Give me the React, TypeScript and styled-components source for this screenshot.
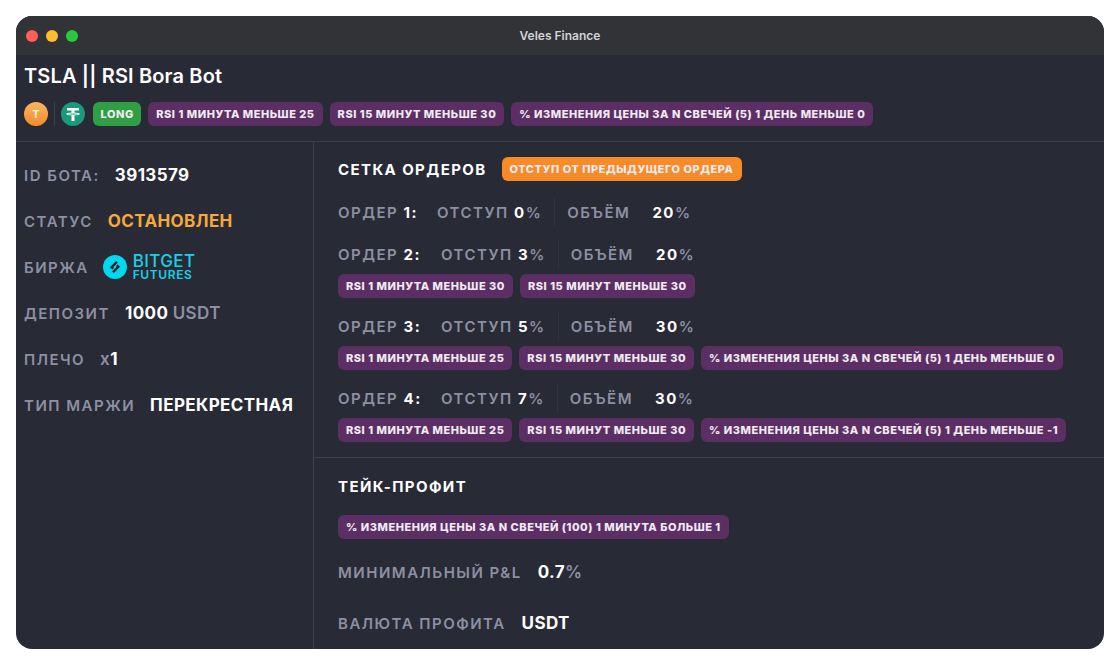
import React from "react";
import styled, { createGlobalStyle } from "styled-components";

const GlobalStyle = createGlobalStyle`
  html, body {
    margin: 0;
    background: #fff;
    font-family: "Inter", "Liberation Sans", sans-serif;
  }
`;

const Page = styled.div`
  padding: 16px;
  width: 1120px;
  height: 665px;
  box-sizing: border-box;
`;

const Window = styled.div`
  width: 1088px;
  height: 633px;
  background: #282a36;
  border-radius: 16px;
  overflow: hidden;
  display: flex;
  flex-direction: column;
`;

const TitleBar = styled.div`
  height: 39px;
  flex: none;
  background: #323336;
  display: flex;
  align-items: center;
  justify-content: center;
  position: relative;
  color: #d2d3d5;
  font-size: 12px;
  font-weight: 600;
`;

const Lights = styled.div`
  position: absolute;
  left: 10px;
  top: 14px;
  display: flex;
  gap: 8px;
`;

const Light = styled.span<{ $color: string }>`
  width: 12px;
  height: 12px;
  border-radius: 50%;
  background: ${(p) => p.$color};
`;

const Header = styled.div`
  flex: none;
  height: 87px;
  padding: 9px 8px 0;
  box-sizing: border-box;
  border-bottom: 1px solid #3b3e4b;
`;

const BotTitle = styled.h1`
  margin: 0 0 14px;
  font-size: 20px;
  line-height: 24px;
  font-weight: 600;
  letter-spacing: 0.15px;
  color: #fff;
`;

const TagRow = styled.div`
  display: flex;
  align-items: center;
  gap: 7px;
`;

const CoinGroup = styled.div`
  display: flex;
  align-items: center;
  gap: 6px;
  margin-right: 1px;
`;

const CoinDivider = styled.span`
  width: 1px;
  height: 24px;
  background: #3b3e4b;
`;

const CoinT = styled.span`
  width: 24px;
  height: 24px;
  border-radius: 50%;
  background: linear-gradient(180deg, #f9b65e, #f58a2c);
  color: #fff0dd;
  font-size: 11px;
  font-weight: 700;
  display: flex;
  align-items: center;
  justify-content: center;
`;

const Tag = styled.span<{ $bg?: string }>`
  height: 24px;
  display: inline-flex;
  align-items: center;
  padding: 0 8px;
  border-radius: 6px;
  background: ${(p) => p.$bg ?? "#5c2f64"};
  color: #f1eaf2;
  font-size: 11px;
  font-weight: 800;
  letter-spacing: 0.53px;
  white-space: nowrap;
`;

const LongTag = styled(Tag)`
  padding: 0 7.5px;
`;

const Main = styled.div`
  flex: 1;
  display: flex;
  min-height: 0;
`;

const Sidebar = styled.div`
  width: 298px;
  flex: none;
  border-right: 1px solid #3b3e4b;
  padding: 10px 8px 0;
  box-sizing: border-box;
  display: flex;
  flex-direction: column;
`;

const InfoRow = styled.div`
  height: 46px;
  display: flex;
  align-items: center;
  gap: 15px;
`;

const Label = styled.span`
  color: #8d90a2;
  font-size: 15px;
  font-weight: 600;
  letter-spacing: 1.5px;
  white-space: nowrap;
`;

const Value = styled.span<{ $color?: string }>`
  color: ${(p) => p.$color ?? "#fff"};
  font-size: 17px;
  font-weight: 700;
  letter-spacing: 0.4px;
  white-space: nowrap;
`;

const Muted = styled.span`
  color: #8d90a2;
  font-weight: 600;
`;

const Exchange = styled.div`
  display: flex;
  align-items: center;
  gap: 6px;
  margin-left: -1px;
  color: #1bd0e6;
`;

const ExchangeText = styled.div`
  display: flex;
  flex-direction: column;
`;

const ExchangeName = styled.span`
  font-size: 17px;
  line-height: 15px;
  font-weight: 500;
  letter-spacing: 0.4px;
`;

const ExchangeSub = styled.span`
  font-size: 12px;
  line-height: 12px;
  font-weight: 600;
  letter-spacing: 0.6px;
`;

const Content = styled.div`
  flex: 1;
  display: flex;
  flex-direction: column;
`;

const Section = styled.div<{ $border?: boolean }>`
  padding: ${(p) => (p.$border ? "15px 24px 15px" : "16px 24px 0")};
  box-sizing: border-box;
  border-bottom: ${(p) => (p.$border ? "1px solid #3b3e4b" : "none")};
`;

const SectionHead = styled.div`
  display: flex;
  align-items: center;
  gap: 15px;
  height: 24px;
`;

const SectionTitle = styled.h2`
  margin: 0;
  color: #fff;
  font-size: 15px;
  font-weight: 700;
  letter-spacing: 1.4px;
`;

const OrderList = styled.div`
  display: flex;
  flex-direction: column;
  gap: 14px;
  margin-top: 17px;
`;

const OrderBlock = styled.div`
  display: flex;
  flex-direction: column;
  gap: 6px;
`;

const OrderLine = styled.div`
  display: flex;
  align-items: center;
  height: 28px;
`;

const OrderName = styled(Label)<{ $width: number }>`
  width: ${(p) => p.$width}px;
  flex: none;
`;

const OrderCell = styled(Label)`
  display: inline-flex;
  align-items: center;
  white-space: pre;
`;

const VolumeValue = styled(OrderCell)`
  margin-left: 22px;
`;

const OrderDivider = styled.span`
  width: 1px;
  height: 28px;
  background: #323541;
  margin: 0 12px;
`;

const Num = styled.span`
  color: #fff;
  font-weight: 700;
`;

const TagWrap = styled.div`
  display: flex;
  gap: 7px;
`;

const ProfitTags = styled(TagWrap)`
  margin-top: 17px;
`;

const TpRow = styled.div<{ $top: number }>`
  display: flex;
  align-items: center;
  gap: 16px;
  height: 28px;
  margin-top: ${(p) => p.$top}px;
`;

function TetherIcon() {
  return (
    <svg width="24" height="24" viewBox="0 0 24 24">
      <circle cx="12" cy="12" r="12" fill="#1a9a7c" />
      <path d="M6 6h12v2.6h-4.5v1.9c2.6.1 5.3.6 5.3 1.4s-2.7 1.3-5.3 1.4v5.7h-3v-5.7c-2.6-.1-5.3-.6-5.3-1.4s2.7-1.3 5.3-1.4V8.6H6z" fill="#fff" />
      <path d="M6.8 12c1 .4 3 .6 5.2.6s4.2-.2 5.2-.6c-1-.4-3-.6-5.2-.6s-4.2.2-5.2.6z" fill="#1a9a7c" />
    </svg>
  );
}

function BitgetIcon() {
  return (
    <svg width="24" height="24" viewBox="0 0 24 24">
      <circle cx="12" cy="12" r="12" fill="#00d8f0" />
      <path d="M14 6.8 8.6 12.2l1.6 1.6" fill="none" stroke="#14161c" strokeWidth="2.3" />
      <path d="M10 17.2l5.4-5.4-1.6-1.6" fill="none" stroke="#14161c" strokeWidth="2.3" />
    </svg>
  );
}

const orders = [
  { n: 1, off: 0, vol: 20, nameW: 99, tags: [] as string[] },
  { n: 2, off: 3, vol: 20, nameW: 103, tags: ["RSI 1 МИНУТА МЕНЬШЕ 30", "RSI 15 МИНУТ МЕНЬШЕ 30"] },
  {
    n: 3,
    off: 5,
    vol: 30,
    nameW: 103,
    tags: ["RSI 1 МИНУТА МЕНЬШЕ 25", "RSI 15 МИНУТ МЕНЬШЕ 30", "% ИЗМЕНЕНИЯ ЦЕНЫ ЗА N СВЕЧЕЙ (5) 1 ДЕНЬ МЕНЬШЕ 0"]
  },
  {
    n: 4,
    off: 7,
    vol: 30,
    nameW: 103,
    tags: ["RSI 1 МИНУТА МЕНЬШЕ 25", "RSI 15 МИНУТ МЕНЬШЕ 30", "% ИЗМЕНЕНИЯ ЦЕНЫ ЗА N СВЕЧЕЙ (5) 1 ДЕНЬ МЕНЬШЕ -1"]
  }
];

export default function App() {
  return (
    <Page>
      <GlobalStyle />
      <Window>
        <TitleBar>
          <Lights>
            <Light $color="#ff5f57" />
            <Light $color="#febc2e" />
            <Light $color="#28c840" />
          </Lights>
          Veles Finance
        </TitleBar>
        <Header>
          <BotTitle>TSLA || RSI Bora Bot</BotTitle>
          <TagRow>
            <CoinGroup>
              <CoinT>T</CoinT>
              <CoinDivider />
              <TetherIcon />
            </CoinGroup>
            <LongTag $bg="#2f9e44">LONG</LongTag>
            <Tag>RSI 1 МИНУТА МЕНЬШЕ 25</Tag>
            <Tag>RSI 15 МИНУТ МЕНЬШЕ 30</Tag>
            <Tag>% ИЗМЕНЕНИЯ ЦЕНЫ ЗА N СВЕЧЕЙ (5) 1 ДЕНЬ МЕНЬШЕ 0</Tag>
          </TagRow>
        </Header>
        <Main>
          <Sidebar>
            <InfoRow>
              <Label>ID БОТА:</Label>
              <Value>3913579</Value>
            </InfoRow>
            <InfoRow>
              <Label>СТАТУС</Label>
              <Value $color="#f5a93b">ОСТАНОВЛЕН</Value>
            </InfoRow>
            <InfoRow>
              <Label>БИРЖА</Label>
              <Exchange>
                <BitgetIcon />
                <ExchangeText>
                  <ExchangeName>BITGET</ExchangeName>
                  <ExchangeSub>FUTURES</ExchangeSub>
                </ExchangeText>
              </Exchange>
            </InfoRow>
            <InfoRow>
              <Label>ДЕПОЗИТ</Label>
              <Value>
                1000 <Muted>USDT</Muted>
              </Value>
            </InfoRow>
            <InfoRow>
              <Label>ПЛЕЧО</Label>
              <Value>
                <Muted>x</Muted>1
              </Value>
            </InfoRow>
            <InfoRow>
              <Label>ТИП МАРЖИ</Label>
              <Value>ПЕРЕКРЕСТНАЯ</Value>
            </InfoRow>
          </Sidebar>
          <Content>
            <Section $border>
              <SectionHead>
                <SectionTitle>СЕТКА ОРДЕРОВ</SectionTitle>
                <Tag $bg="#f78b27">ОТСТУП ОТ ПРЕДЫДУЩЕГО ОРДЕРА</Tag>
              </SectionHead>
              <OrderList>
                {orders.map((o) => (
                  <OrderBlock key={o.n}>
                    <OrderLine>
                      <OrderName $width={o.nameW}>
                        ОРДЕР <Num>{o.n}:</Num>
                      </OrderName>
                      <OrderCell>
                        ОТСТУП <Num>{o.off}</Num>%
                      </OrderCell>
                      <OrderDivider />
                      <OrderCell>ОБЪЁМ</OrderCell>
                      <VolumeValue>
                        <Num>{o.vol}</Num>%
                      </VolumeValue>
                    </OrderLine>
                    {o.tags.length > 0 && (
                      <TagWrap>
                        {o.tags.map((t) => (
                          <Tag key={t}>{t}</Tag>
                        ))}
                      </TagWrap>
                    )}
                  </OrderBlock>
                ))}
              </OrderList>
            </Section>
            <Section>
              <SectionHead>
                <SectionTitle>ТЕЙК-ПРОФИТ</SectionTitle>
              </SectionHead>
              <ProfitTags>
                <Tag>% ИЗМЕНЕНИЯ ЦЕНЫ ЗА N СВЕЧЕЙ (100) 1 МИНУТА БОЛЬШЕ 1</Tag>
              </ProfitTags>
              <TpRow $top={19}>
                <Label>МИНИМАЛЬНЫЙ P&L</Label>
                <Value>
                  0.7<Muted>%</Muted>
                </Value>
              </TpRow>
              <TpRow $top={23}>
                <Label>ВАЛЮТА ПРОФИТА</Label>
                <Value>USDT</Value>
              </TpRow>
            </Section>
          </Content>
        </Main>
      </Window>
    </Page>
  );
}
